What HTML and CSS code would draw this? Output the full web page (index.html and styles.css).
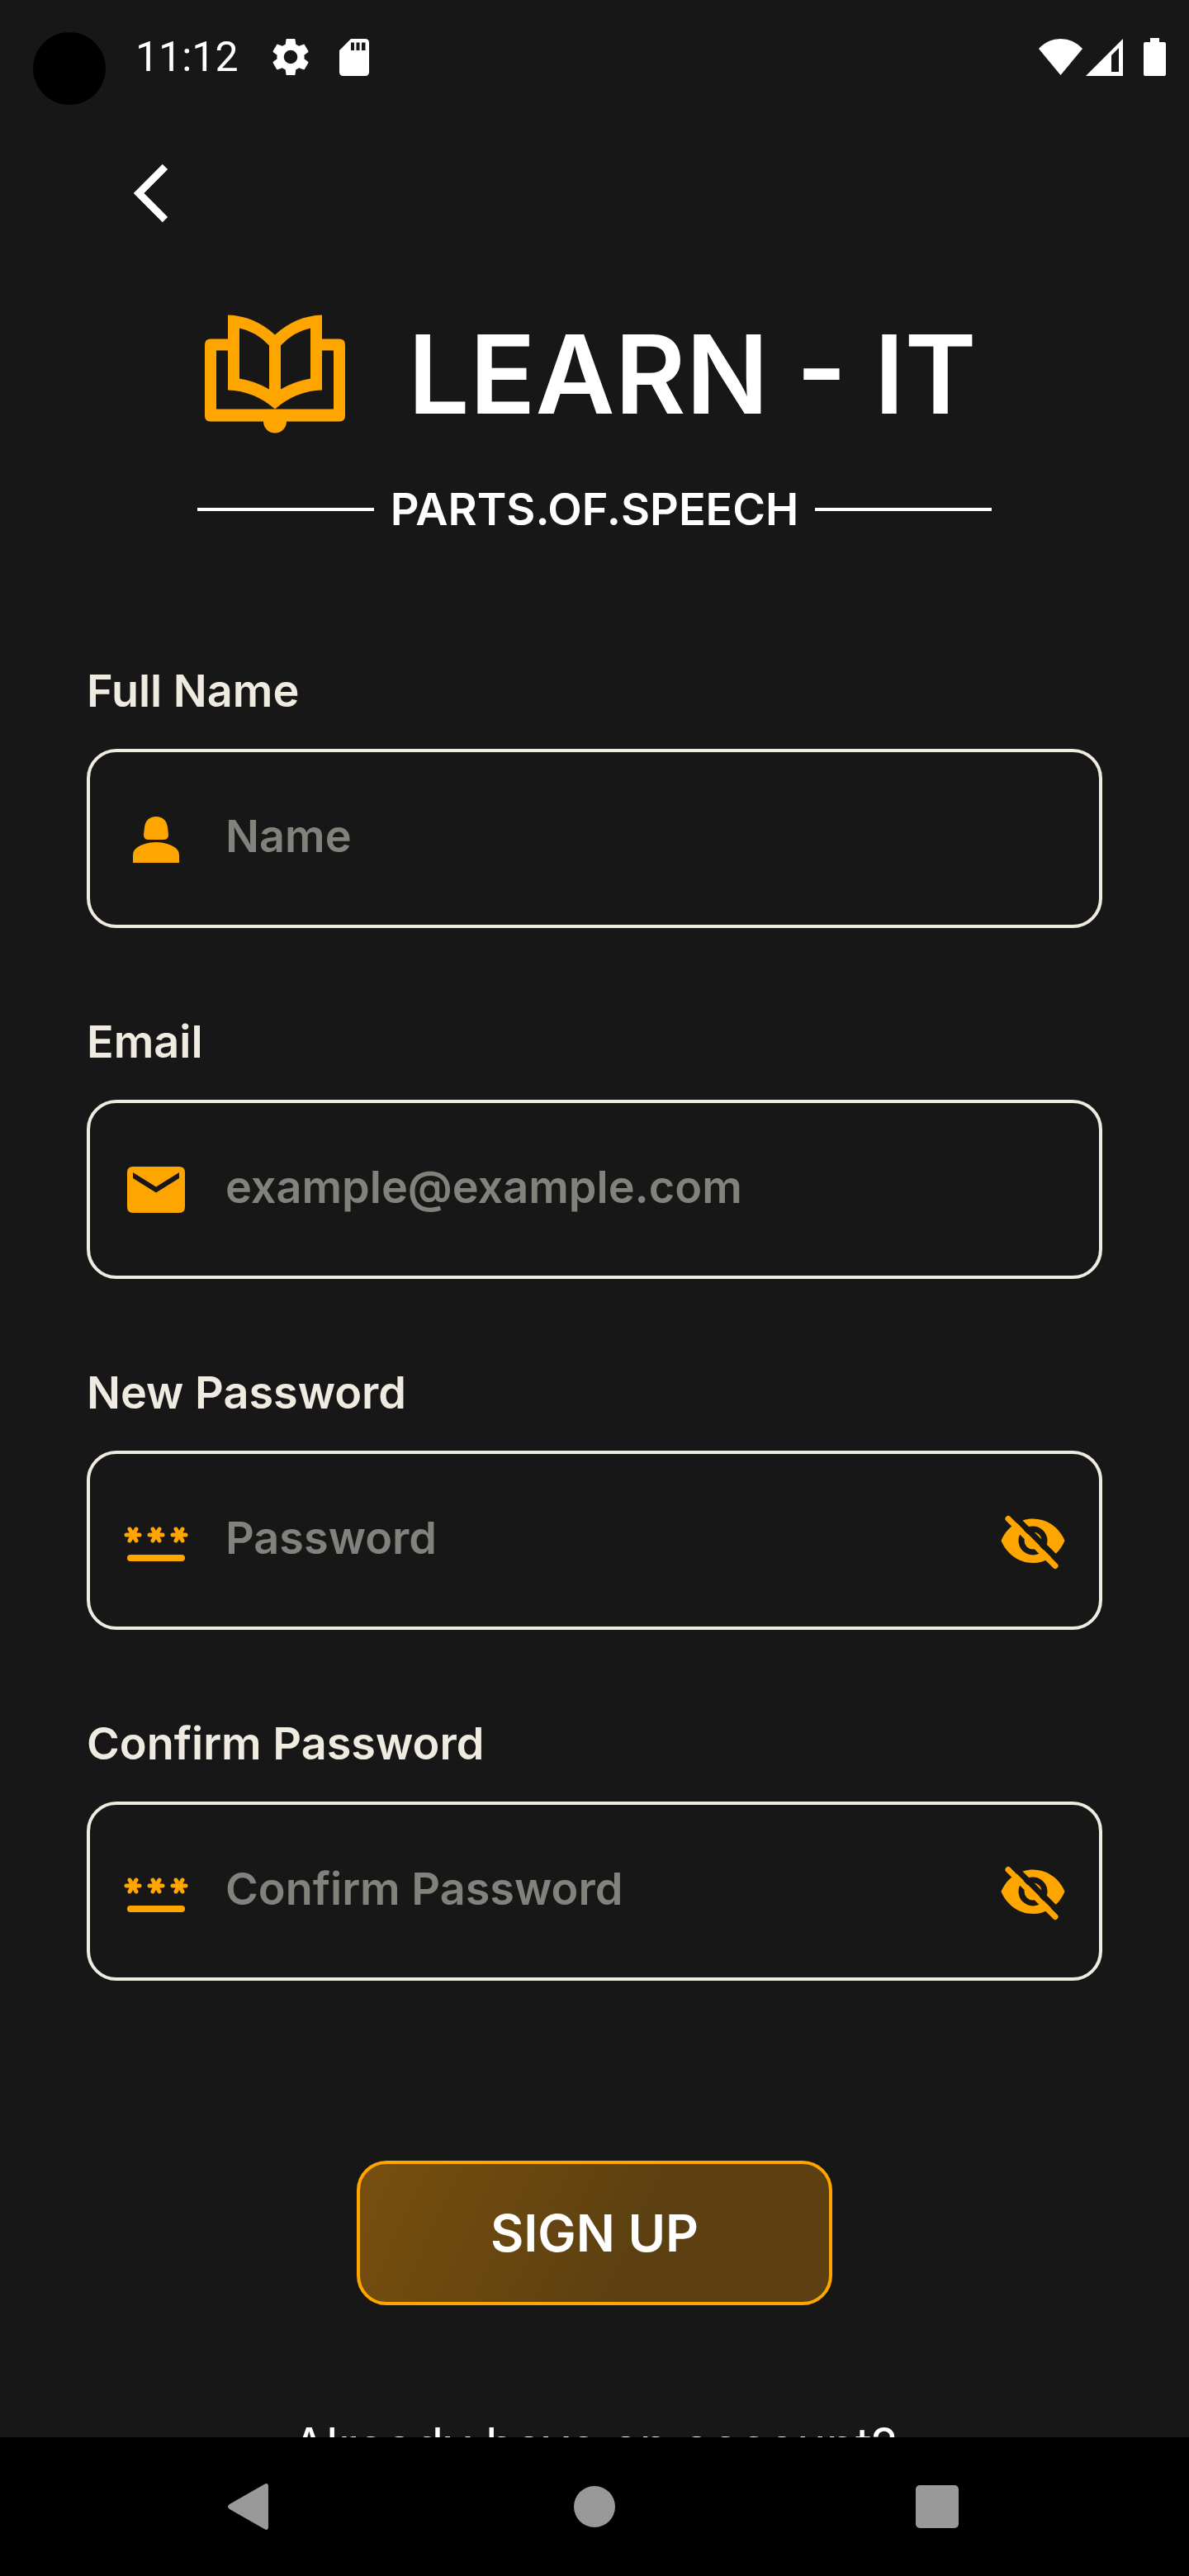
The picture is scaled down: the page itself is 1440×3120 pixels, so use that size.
FILE: index.html
```html
<!DOCTYPE html>
<html lang="en">
<head>
<meta charset="utf-8">
<meta name="viewport" content="width=device-width, initial-scale=1">
<title>Learn - It | Sign up</title>
<link rel="stylesheet" href="styles.css">
</head>
<body>
<svg class="sprite" aria-hidden="true">
  <symbol id="asterisks" viewBox="0 0 84 84">
    <g stroke="currentColor" stroke-width="5" stroke-linecap="round">
      <path d="M6 35h16M10 28l8 14M18 28l-8 14"/>
      <path d="M34 35h16M38 28l8 14M46 28l-8 14"/>
      <path d="M62 35h16M66 28l8 14M74 28l-8 14"/>
    </g>
    <g fill="currentColor"><circle cx="14" cy="35" r="5"/><circle cx="42" cy="35" r="5"/><circle cx="70" cy="35" r="5"/></g>
    <path d="M11 63h62" stroke="currentColor" stroke-width="8" stroke-linecap="round"/>
  </symbol>
  <symbol id="eye-off" viewBox="0 0 84 84">
    <mask id="eye-cut">
      <rect width="84" height="84" fill="#fff"/>
      <circle cx="42" cy="42" r="14" fill="none" stroke="#000" stroke-width="7"/>
      <path d="M16 9L80 73" stroke="#000" stroke-width="7"/>
    </mask>
    <path d="M3.500 42C10 26 25 15.500 42 15.500S74 26 80.500 42C74 58 59 69 42 69S10 58 3.500 42z" fill="currentColor" mask="url(#eye-cut)"/>
    <path d="M12 15.500L69 72.500" stroke="currentColor" stroke-width="7" stroke-linecap="round"/>
  </symbol>
</svg>

<header class="status-bar">
  <span class="camera"></span>
  <time class="clock">11:12</time>
  <svg class="gear" viewBox="2 2 20 20" aria-hidden="true"><path fill="currentColor" d="M19.140 12.940c.040-.300.060-.610.060-.940s-.020-.640-.070-.940l2.030-1.580c.180-.140.230-.410.120-.610l-1.920-3.320c-.120-.220-.370-.290-.590-.220l-2.390.960c-.500-.380-1.030-.700-1.620-.940L14.400 2.810C14.360 2.570 14.160 2.400 13.920 2.400h-3.840c-.240 0-.430.170-.470.410l-.360 2.540c-.590.240-1.130.570-1.620.940l-2.390-.960c-.220-.080-.470 0-.590.220L2.740 8.870c-.120.210-.080.470.120.610l2.030 1.580c-.050.300-.090.630-.090.940s.020.640.070.940l-2.030 1.580c-.180.140-.230.410-.120.610l1.920 3.320c.120.220.370.290.590.220l2.390-.960c.500.380 1.030.700 1.620.940l.360 2.540c.050.240.240.410.480.410h3.840c.240 0 .440-.170.470-.410l.360-2.540c.590-.240 1.130-.560 1.620-.940l2.390.960c.220.080.470 0 .590-.220l1.920-3.320c.120-.220.070-.470-.120-.610zM12 15.600a3.600 3.600 0 1 1 0-7.200 3.600 3.600 0 0 1 0 7.200z"/></svg>
  <svg class="card" viewBox="0 0 36 45" aria-hidden="true"><path fill="currentColor" fill-rule="evenodd" d="M14 0H31Q36 0 36 5V40Q36 45 31 45H5Q0 45 0 40V14zM14 4.500V14H18V4.500zM20.500 4.500V14H24.500V4.500zM27 4.500V14H31.500V4.500z"/></svg>
  <span class="spacer"></span>
  <svg class="wifi" viewBox="0 0 53 44" aria-hidden="true"><path fill="currentColor" d="M0 12Q11 0 26.500 0T53 12L26.500 44z"/></svg>
  <svg class="signal" viewBox="0 0 45 45" aria-hidden="true"><path fill="currentColor" fill-rule="evenodd" d="M45 0V45H0zM40 11L31 20V40H40z"/></svg>
  <svg class="battery" viewBox="0 0 27 46" aria-hidden="true"><path fill="currentColor" d="M8 0H19V5H25Q27 5 27 7V44Q27 46 25 46H2Q0 46 0 44V7Q0 5 2 5H8z"/></svg>
</header>

<main class="screen">
  <button class="back" type="button" aria-label="Back">
    <svg viewBox="0 0 41 70" aria-hidden="true"><path d="M38 3L6 35L38 67" fill="none" stroke="currentColor" stroke-width="9"/></svg>
  </button>

  <div class="brand">
    <svg class="logo" viewBox="0 0 170 143" aria-hidden="true">
      <g fill="#ffa500" fill-rule="evenodd">
        <path d="M28 29H7Q0 29 0 36V122Q0 129 7 129H71A14 14 0 0 0 99 129H163Q170 129 170 122V36Q170 29 163 29H142V43H156V114H14V43H28z"/>
        <path d="M28 0Q60 1 85 24Q110 1 142 0V91Q110 92 85 114Q60 92 28 91zM42 16V77Q61 80 78 90V37Q62 20 42 16zM128 16V77Q109 80 92 90V37Q108 20 128 16z"/>
      </g>
    </svg>
    <h1 class="title">LEARN - IT</h1>
  </div>
  <p class="tagline">PARTS.OF.SPEECH</p>

  <form class="form">
    <div class="field">
      <label class="label" for="name">Full Name</label>
      <div class="box">
        <svg class="icon" viewBox="0 0 84 84" aria-hidden="true"><path fill="currentColor" d="M42 15C50 15 55 20 56 28L57 37Q57 43 51 43H33Q27 43 27 37L28 28C29 20 34 15 42 15zM42 46C52 46 60 49 65 52.500Q70 56 70 62V71H14V62Q14 56 19 52.500C24 49 32 46 42 46z"/></svg>
        <input class="input" id="name" type="text" placeholder="Name">
      </div>
    </div>
    <div class="field">
      <label class="label" for="email">Email</label>
      <div class="box">
        <svg class="icon" viewBox="0 0 84 84" aria-hidden="true"><path fill="currentColor" fill-rule="evenodd" d="M14 14H70Q77 14 77 21V63Q77 70 70 70H14Q7 70 7 63V21Q7 14 14 14zM14 21V28L42 45.500L70 28V21L42 38.500z"/></svg>
        <input class="input" id="email" type="email" placeholder="example@example.com">
      </div>
    </div>
    <div class="field">
      <label class="label" for="password">New Password</label>
      <div class="box">
        <svg class="icon" aria-hidden="true"><use href="#asterisks"/></svg>
        <input class="input" id="password" type="password" placeholder="Password">
        <button class="reveal" type="button" aria-label="Show password"><svg class="icon" aria-hidden="true"><use href="#eye-off"/></svg></button>
      </div>
    </div>
    <div class="field">
      <label class="label" for="confirm">Confirm Password</label>
      <div class="box">
        <svg class="icon" aria-hidden="true"><use href="#asterisks"/></svg>
        <input class="input" id="confirm" type="password" placeholder="Confirm Password">
        <button class="reveal" type="button" aria-label="Show confirmed password"><svg class="icon" aria-hidden="true"><use href="#eye-off"/></svg></button>
      </div>
    </div>
    <button class="submit" type="submit">SIGN UP</button>
  </form>
  <p class="account">Already have an account?</p>
</main>

<nav class="nav-bar" aria-label="System">
  <button class="nav-key" type="button" aria-label="Back"><svg viewBox="0 0 60 60" aria-hidden="true"><path fill="currentColor" d="M3 27L45 3Q50 0 50 6V54Q50 60 45 57L3 33Q-1 30 3 27z"/></svg></button>
  <button class="nav-key" type="button" aria-label="Home"><svg viewBox="0 0 60 60" aria-hidden="true"><circle fill="currentColor" cx="30" cy="30" r="25"/></svg></button>
  <button class="nav-key" type="button" aria-label="Recent apps"><svg viewBox="0 0 60 60" aria-hidden="true"><rect fill="currentColor" x="4" y="4" width="52" height="52" rx="5"/></svg></button>
</nav>
</body>
</html>
```

FILE: styles.css
```css
* {
  box-sizing: border-box;
}

body {
  display: flex;
  flex-direction: column;
  height: 100vh;
  margin: 0;
  background: #171717;
  color: #fff;
  font-family: Inter, "Open Sans", sans-serif;
}

button {
  padding: 0;
  border: 0;
  background: none;
  color: inherit;
  font: inherit;
  cursor: pointer;
}

svg {
  display: block;
}

.sprite {
  position: absolute;
  width: 0;
  height: 0;
}

/* Status bar */
.status-bar {
  display: flex;
  flex: none;
  align-items: center;
  height: 138px;
  padding: 0 28px 0 40px;
}

.camera {
  width: 88px;
  height: 88px;
  margin: 39px 36px 0 0;
  align-self: flex-start;
  border-radius: 50%;
  background: #000;
}

.clock {
  margin-right: 40px;
  font-family: Roboto, sans-serif;
  font-size: 50px;
  line-height: 60px;
}

.gear {
  width: 46px;
  height: 46px;
  margin-right: 36px;
}

.card {
  width: 36px;
  height: 45px;
}

.spacer {
  flex: 1;
}

.wifi {
  width: 53px;
  height: 44px;
  margin-right: 4px;
}

.signal {
  width: 45px;
  height: 45px;
  margin-right: 25px;
}

.battery {
  width: 27px;
  height: 46px;
}

/* Sign-up screen */
.screen {
  flex: 1;
  min-height: 0;
  padding: 61px 105px 0;
  overflow: hidden;
}

.back {
  display: block;
  margin-left: 57px;
}

.back svg {
  width: 41px;
  height: 70px;
}

.brand {
  display: flex;
  align-items: center;
  gap: 76px;
  max-width: 962px;
  margin: 108px auto 0;
  padding-left: 9px;
}

.logo {
  flex: none;
  width: 170px;
  height: 150px;
}

.title {
  margin: 0;
  font-size: 132px;
  font-weight: 600;
  line-height: 152px;
  white-space: nowrap;
}

.tagline {
  display: flex;
  justify-content: center;
  align-items: center;
  gap: 20px;
  max-width: 962px;
  margin: 58px auto 0;
  font-size: 54px;
  font-weight: 600;
  line-height: 60px;
}

.tagline::before,
.tagline::after {
  content: "";
  flex: 1;
  height: 4px;
  background: #fff;
}

.form {
  display: flex;
  flex-direction: column;
  gap: 108px;
  margin-top: 160px;
  color: #f0ebe1;
}

.field {
  display: flex;
  flex-direction: column;
  gap: 40px;
}

.label {
  font-size: 54px;
  font-weight: 600;
  line-height: 60px;
}

.box {
  display: flex;
  align-items: center;
  gap: 42px;
  height: 217px;
  padding: 0 38px;
  border: 4px solid #f0ebe1;
  border-radius: 36px;
}

.icon {
  flex: none;
  width: 84px;
  height: 84px;
  color: #ffa500;
}

.input {
  flex: 1;
  min-width: 0;
  height: 100%;
  padding: 0 0 6px;
  border: 0;
  outline: 0;
  background: none;
  color: inherit;
  font: 600 54px Inter, "Open Sans", sans-serif;
}

.input::placeholder {
  color: #83817c;
  opacity: 1;
}

.submit {
  align-self: center;
  width: 576px;
  height: 175px;
  margin-top: 110px;
  border: 4px solid #ffa500;
  border-radius: 36px;
  background: linear-gradient(115deg, #784f0e, #5c4011 60%);
  color: #fff;
  font-size: 62px;
  font-weight: 600;
}

.account {
  margin: 138px 0 0;
  font-size: 60px;
  line-height: 64px;
  text-align: center;
}

/* System navigation */
.nav-bar {
  display: flex;
  flex: none;
  justify-content: space-between;
  align-items: center;
  height: 168px;
  padding: 0 275px;
  background: #000;
  color: #999;
}

.nav-key svg {
  width: 60px;
  height: 60px;
}
```
